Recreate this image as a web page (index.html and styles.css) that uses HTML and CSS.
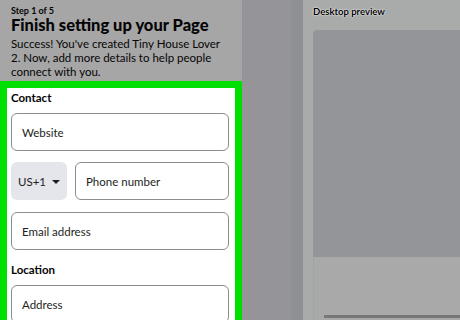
FILE: index.html
```html
<!DOCTYPE html>
<html>
<head>
<meta charset="utf-8">
<link rel="stylesheet" href="styles.css">
</head>
<body>
<div class="screen">
  <div class="left">
    <div class="head">
      <div class="step">Step 1 of 5</div>
      <h1 class="title">Finish setting up your Page</h1>
      <p class="desc">Success! You've created Tiny House Lover 2. Now, add more details to help people connect with you.</p>
    </div>
    <div class="highlight">
      <div class="form">
        <div class="label">Contact</div>
        <div class="field">Website</div>
        <div class="row">
          <div class="country">US+1 <span class="caret"></span></div>
          <div class="field grow">Phone number</div>
        </div>
        <div class="field">Email address</div>
        <div class="label loc">Location</div>
        <div class="field">Address</div>
      </div>
    </div>
  </div>
  <div class="mid"><div class="mid-edge"></div></div>
  <div class="right">
    <div class="preview-title">Desktop preview</div>
    <div class="preview">
      <div class="preview-top"></div>
      <div class="preview-bottom"><div class="preview-line"></div></div>
    </div>
  </div>
</div>
</body>
</html>
```

FILE: styles.css
```css
* { box-sizing: border-box; }
html, body { margin: 0; padding: 0; }
body {
  width: 460px;
  height: 320px;
  overflow: hidden;
  font-family: Lato, "Liberation Sans", sans-serif;
  color: #050505;
}
.screen {
  display: flex;
  height: 320px;
}
.left {
  width: 242px;
  flex: none;
  background: #a6a6a6;
  display: flex;
  flex-direction: column;
}
.head {
  flex: none;
  padding: 5px 14px 0 11px;
  height: 81px;
}
.step {
  font-size: 9px;
  font-weight: 700;
  line-height: 12px;
}
.title {
  margin: 0;
  font-size: 16.5px;
  font-weight: 900;
  line-height: 17px;
}
.desc {
  margin: 3px 0 0;
  font-size: 11.5px;
  line-height: 14px;
}
.highlight {
  flex: 1;
  border: 7px solid #00e000;
  border-bottom: none;
  background: #fff;
}
.form {
  padding: 2px 6px 0 4px;
  display: flex;
  flex-direction: column;
}
.label {
  font-size: 11.5px;
  font-weight: 700;
  line-height: 16px;
}
.label.loc { margin-top: 12px; }
.field {
  flex: none;
  height: 38px;
  border: 1px solid #8c8c8c;
  border-radius: 6px;
  display: flex;
  align-items: center;
  padding-left: 10px;
  font-size: 11.5px;
  color: #1c1e21;
  margin-top: 7px;
}
.row {
  flex: none;
  display: flex;
  gap: 8px;
  margin-top: 11px;
  margin-bottom: 5px;
}
.row .field { margin-top: 0; }
.grow { flex: 1; }
.country {
  width: 56px;
  height: 38px;
  background: #e4e6eb;
  border-radius: 6px;
  display: flex;
  align-items: center;
  padding-left: 7px;
  font-size: 11.5px;
  color: #1c1e21;
}
.caret {
  margin-left: 6px;
  margin-top: 2px;
  width: 0;
  height: 0;
  border-left: 4px solid transparent;
  border-right: 4px solid transparent;
  border-top: 4px solid #1c1e21;
}
.mid {
  width: 61px;
  flex: none;
  background: #959599;
  display: flex;
  justify-content: flex-end;
}
.mid-edge {
  width: 12px;
  background: #8f9094;
}
.right {
  flex: 1;
  background: #a9aaaa;
  padding: 6px 0 0 10px;
  display: flex;
  flex-direction: column;
}
.preview-title {
  font-size: 9.5px;
  font-weight: 700;
  line-height: 12px;
  color: #000;
  text-shadow: 0 0 2px #fff, 0 0 1px #fff;
}
.preview {
  margin-top: 12px;
  flex: 1;
  display: flex;
  flex-direction: column;
}
.preview-top {
  flex: none;
  height: 227px;
  background: #949598;
  border-radius: 4px 0 0 0;
}
.preview-bottom {
  flex: 1;
  background: #a9a9a9;
  border-left: 1px solid #a2a3a3;
  padding: 58px 0 0 10px;
}
.preview-line {
  height: 3px;
  background: #777;
}
```
